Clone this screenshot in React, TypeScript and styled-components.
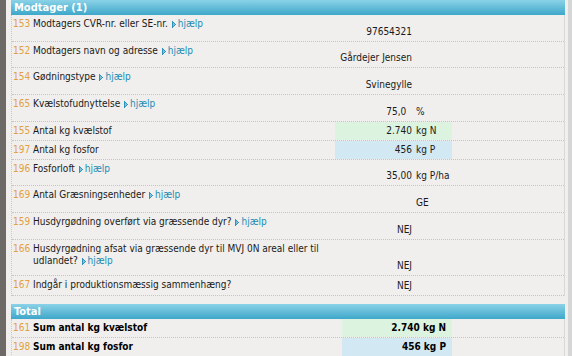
import styled, { createGlobalStyle } from "styled-components";

const Global = createGlobalStyle`
  html, body {
    margin: 0;
    padding: 0;
    background: #f0efed;
    overflow: hidden;
  }
  body {
    font-family: "DejaVu Sans", "Liberation Sans", sans-serif;
    font-stretch: condensed;
    font-size: 10px;
    line-height: 12px;
    color: #1a1a1a;
  }
`;

const Page = styled.div`
  display: flex;
  width: 572px;
  height: 356px;
`;

const LeftStrip = styled.div`
  width: 6px;
  background: #6d6966;
`;

const Main = styled.div`
  width: 554px;
  padding-left: 5px;
  display: flex;
  flex-direction: column;
  gap: 8px;
`;

const RightStrip = styled.div`
  margin-left: auto;
  width: 4px;
  background: #d6d6d6;
`;

const Section = styled.section``;

const Header = styled.div`
  height: 15px;
  box-sizing: border-box;
  padding: 1px 3px 0;
  background: linear-gradient(#8ad2e7, #3ea7ca);
  color: #fff;
  font-weight: bold;
  font-size: 11px;
  line-height: 14px;
`;

const Body = styled.div`
  border-left: 1px dotted #c9c9c9;
  border-right: 1px solid #d9d9d9;
`;

const Row = styled.div<{ $h?: number; $total?: boolean }>`
  display: grid;
  grid-template-columns: ${(p) => (p.$total ? "21px 309px 110px 1fr" : "21px 302px 117px 1fr")};
  min-height: ${(p) => p.$h ?? 17}px;
  border-bottom: 1px dotted #c4c4c4;
`;

const No = styled.div`
  padding: 3px 0 0 1px;
  color: #e3a03f;
`;

const Label = styled.div<{ $bold?: boolean }>`
  padding: 3px 4px 3px 0;
  font-weight: ${(p) => (p.$bold ? "bold" : "normal")};
  color: ${(p) => (p.$bold ? "#000" : "#1a1a1a")};
`;

const Help = styled.span`
  color: #1d8db6;
  white-space: nowrap;
  svg {
    margin: 0 1px 0 1px;
    vertical-align: -1px;
  }
`;

const tones: Record<string, string> = {
  green: "#dcf3df",
  blue: "#d2e8f2",
};

const Value = styled.div<{ $tone?: string }>`
  display: grid;
  grid-template-columns: 77px 1fr;
  align-items: end;
  padding-bottom: 3px;
  background: ${(p) => (p.$tone ? tones[p.$tone] : "transparent")};
`;

const Num = styled.span`
  text-align: right;
  white-space: pre;
`;

const Unit = styled.span`
  padding-left: 4px;
  white-space: nowrap;
`;

const TotalValue = styled.div<{ $tone: string }>`
  display: flex;
  align-items: end;
  justify-content: flex-end;
  padding: 0 6px 3px 0;
  font-weight: bold;
  color: #000;
  background: ${(p) => tones[p.$tone]};
`;

const Arrow = () => (
  <svg width="5" height="7" viewBox="0 0 5 7">
    <path d="M0 0h1v1h1v1h1v1h1v1h-1v1h-1v1h-1v1h-1z" fill="#2f93bb" />
    <path d="M1 2h1v1h1v1h-1v1h-1z" fill="#7cc0dc" />
  </svg>
);

type Item = {
  no: number;
  label: string;
  help?: boolean;
  value: string;
  unit?: string;
  tone?: string;
  h?: number;
};

const items: Item[] = [
  { no: 153, label: "Modtagers CVR-nr. eller SE-nr.", help: true, value: "97654321", h: 26 },
  { no: 152, label: "Modtagers navn og adresse", help: true, value: "Gårdejer Jensen", h: 25 },
  { no: 154, label: "Gødningstype", help: true, value: "Svinegylle", h: 26 },
  { no: 165, label: "Kvælstofudnyttelse", help: true, value: "75,0  ", unit: "%", h: 26 },
  { no: 155, label: "Antal kg kvælstof", value: "2.740", unit: "kg N", tone: "green" },
  { no: 197, label: "Antal kg fosfor", value: "456", unit: "kg P", tone: "blue" },
  { no: 196, label: "Fosforloft", help: true, value: "35,00", unit: "kg P/ha", h: 25 },
  { no: 169, label: "Antal Græsningsenheder", help: true, value: "", unit: "GE", h: 26 },
  { no: 159, label: "Husdyrgødning overført via græssende dyr?", help: true, value: "NEJ", h: 26 },
  {
    no: 166,
    label: "Husdyrgødning afsat via græssende dyr til MVJ 0N areal eller til udlandet?",
    help: true,
    value: "NEJ",
    h: 35,
  },
  { no: 167, label: "Indgår i produktionsmæssig sammenhæng?", value: "NEJ", h: 19 },
];

const totals = [
  { no: 161, label: "Sum antal kg kvælstof", value: "2.740 kg N", tone: "green" },
  { no: 198, label: "Sum antal kg fosfor", value: "456 kg P", tone: "blue" },
];

export default function App() {
  return (
    <Page>
      <Global />
      <LeftStrip />
      <Main>
        <Section>
          <Header>Modtager (1)</Header>
          <Body>
            {items.map((it) => (
              <Row key={it.no} $h={it.h}>
                <No>{it.no}</No>
                <Label>
                  {it.label}
                  {it.help && (
                    <Help>
                      {" "}
                      <Arrow />
                      hjælp
                    </Help>
                  )}
                </Label>
                <Value $tone={it.tone}>
                  <Num>{it.value}</Num>
                  <Unit>{it.unit}</Unit>
                </Value>
                <div />
              </Row>
            ))}
          </Body>
        </Section>
        <Section>
          <Header>Total</Header>
          <Body>
            {totals.map((t) => (
              <Row key={t.no} $total>
                <No>{t.no}</No>
                <Label $bold>{t.label}</Label>
                <TotalValue $tone={t.tone}>{t.value}</TotalValue>
                <div />
              </Row>
            ))}
          </Body>
        </Section>
      </Main>
      <RightStrip />
    </Page>
  );
}
